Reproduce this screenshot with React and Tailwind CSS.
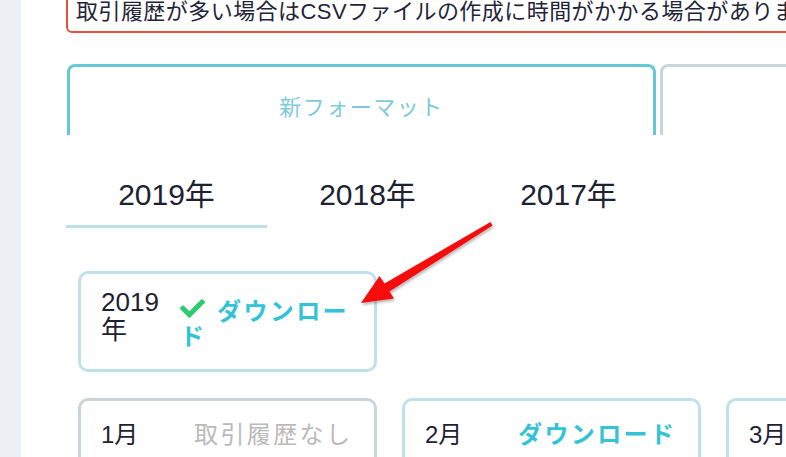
import React from 'react';
import { FaCheck } from 'react-icons/fa';

const years = ['2019年', '2018年', '2017年'];

const months = [
  { label: '1月', status: 'none' },
  { label: '2月', status: 'ok' },
  { label: '3月', status: 'ok' },
];

function MonthCard({ label, status }) {
  const border = status === 'none' ? 'border-[#c9d5da]' : 'border-[#bfe1ea]';
  return (
    <div className={`w-[299px] h-[90px] shrink-0 rounded-[10px] border-[3px] ${border} flex pl-[20px] pt-[19px]`}>
      <div className="w-[93px] shrink-0 text-[24px] leading-[30px] text-[#1d2233]">{label}</div>
      {status === 'none' ? (
        <div className="text-[24px] leading-[30px] tracking-[2.4px] text-[#bababa] whitespace-nowrap">取引履歴なし</div>
      ) : (
        <div className="text-[24px] leading-[30px] tracking-[2.4px] font-bold text-[#34c3d6] whitespace-nowrap">ダウンロード</div>
      )}
    </div>
  );
}

export default function App() {
  return (
    <div
      className="relative flex w-[786px] h-[457px] overflow-hidden bg-white"
      style={{ fontFamily: '"Liberation Sans", "Noto Sans CJK JP", sans-serif' }}
    >
      <aside className="w-[21px] shrink-0 bg-[#edf1f6]" />

      <main className="flex-1 min-w-0 pl-[45px]">
        {/* notice */}
        <div className="-mt-[9px] w-[900px] rounded-[6px] border-2 border-[#e4503a] px-[8px] py-[4px] text-[22px] leading-[30px] tracking-[0.45px] text-[#1f2538] whitespace-nowrap">
          取引履歴が多い場合はCSVファイルの作成に時間がかかる場合があります。
        </div>

        {/* format tabs */}
        <div className="mt-[31px] flex gap-[4px] pl-[1px]">
          <div className="w-[589px] h-[71px] shrink-0 rounded-t-[8px] border-[3px] border-b-0 border-[#66c8d4] pt-[26px] text-center text-[22px] leading-[30px] tracking-[1.5px] text-[#7ccbd8]">
            新フォーマット
          </div>
          <div className="w-[589px] h-[71px] shrink-0 rounded-t-[8px] border-[3px] border-b-0 border-[#c9d5da]" />
        </div>

        {/* year tabs */}
        <div className="flex">
          {years.map((y, i) => (
            <div
              key={y}
              className={`w-[201px] shrink-0 pt-[43px] pb-[13px] text-center text-[30px] leading-[34px] text-[#1d2233] border-b-[3px] ${i === 0 ? 'border-[#bde0e8]' : 'border-transparent'}`}
            >
              {y}
            </div>
          ))}
        </div>

        {/* year download card */}
        <div className="mt-[43px] ml-[12px] w-[299px] h-[101px] rounded-[10px] border-[3px] border-[#bfe1ea] flex pl-[20px] pt-[14px]">
          <div className="w-[79px] shrink-0 text-[26px] leading-[28px] text-[#1d2233]">
            2019
            <br />
            年
          </div>
          <div className="pt-[8px] text-[24px] leading-[25px] tracking-[2.4px] font-bold text-[#34c3d6]">
            <span className="inline-block align-[-1px] mr-[12px] text-[#2ecc71]">
              <FaCheck size={25} />
            </span>
            ダウンロー
            <br />
            ド
          </div>
        </div>

        {/* month cards */}
        <div className="mt-[26px] ml-[12px] flex gap-[25px]">
          {months.map(m => (
            <MonthCard key={m.label} {...m} />
          ))}
        </div>
      </main>

      {/* annotation arrow */}
      <svg
        className="absolute inset-0 pointer-events-none"
        width="786"
        height="457"
        viewBox="0 0 786 457"
      >
        <defs>
          <filter id="arrowShadow" x="-20%" y="-20%" width="140%" height="140%">
            <feDropShadow dx="1" dy="2" stdDeviation="1.5" floodColor="#000" floodOpacity="0.3" />
          </filter>
        </defs>
        <polygon
          points="361,303 379.5,276 384.5,283.5 490.5,222 492.5,225.5 389.5,291.5 394,298.5"
          fill="#f50d0d"
          filter="url(#arrowShadow)"
        />
      </svg>
    </div>
  );
}
